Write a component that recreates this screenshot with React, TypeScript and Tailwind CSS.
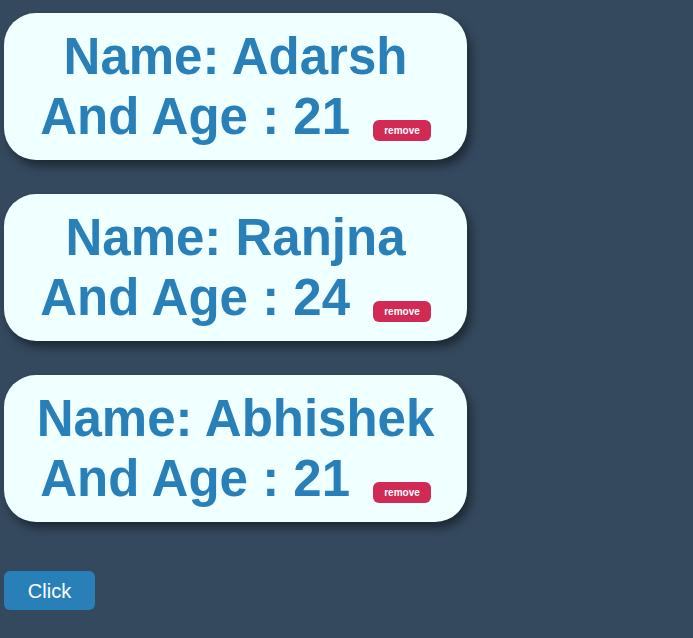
const people = [
  { name: "Adarsh", age: 21 },
  { name: "Ranjna", age: 24 },
  { name: "Abhishek", age: 21 },
];

function PersonCard({ name, age }: { name: string; age: number }) {
  return (
    <div className="w-[463px] rounded-[32px] bg-[#f0ffff] px-2 pt-[14px] pb-[13px] text-center shadow-[4px_6px_10px_rgba(0,0,0,0.45)]">
      <h1 className="text-[51px] font-bold leading-[60px] text-[#2980b9]">
        Name: {name}
        <br />
        And Age : {age}{" "}
        <button className="ml-[9px] rounded-[6px] bg-[#d12a55] px-[11px] py-[5px] align-baseline text-[10px] font-bold leading-[normal] text-white">
          remove
        </button>
      </h1>
    </div>
  );
}

export default function App() {
  return (
    <div className="min-h-[638px] bg-[#34495e] pl-1 pt-[13px] font-['Liberation_Sans',Arial,sans-serif]">
      <div className="flex flex-col gap-[34px]">
        {people.map((p) => (
          <PersonCard key={p.name} name={p.name} age={p.age} />
        ))}
      </div>
      <button className="mt-[49px] h-[39px] w-[91px] rounded-[6px] bg-[#2980b9] text-[20px] text-white">
        Click
      </button>
    </div>
  );
}
